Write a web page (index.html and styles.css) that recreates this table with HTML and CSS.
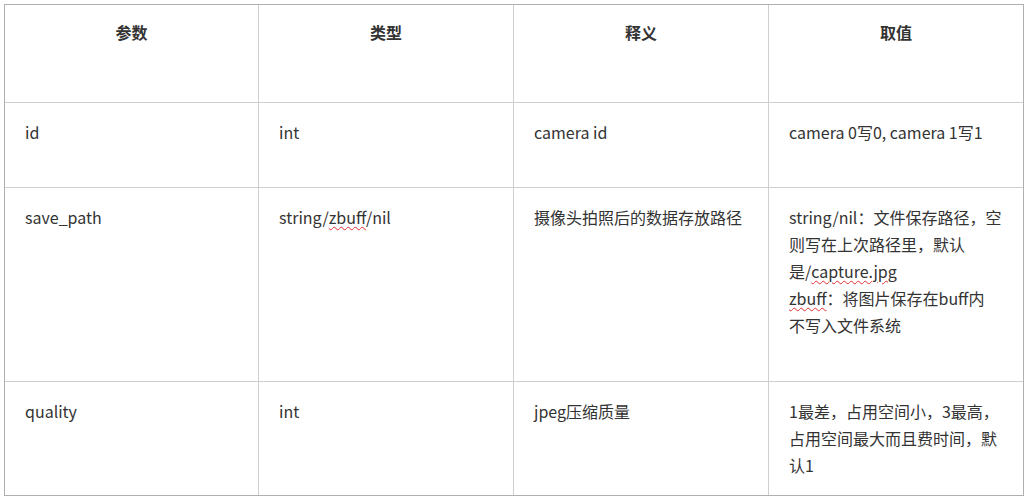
FILE: index.html
```html
<!DOCTYPE html>
<html lang="zh-CN">
<head>
    <meta charset="UTF-8">
    <title>camera.capture 参数</title>
    <link rel="stylesheet" href="styles.css">
</head>
<body>
    <table class="param-table">
        <colgroup>
            <col class="col-a">
            <col class="col-b">
            <col class="col-c">
            <col class="col-d">
        </colgroup>
        <thead>
            <tr class="row-head">
                <th>参数</th>
                <th>类型</th>
                <th>释义</th>
                <th>取值</th>
            </tr>
        </thead>
        <tbody>
            <tr class="row-id">
                <td>id</td>
                <td>int</td>
                <td>camera id</td>
                <td>camera 0写0, camera 1写1</td>
            </tr>
            <tr class="row-path">
                <td>save_path</td>
                <td>string/<span class="typo">zbuff</span>/nil</td>
                <td>摄像头拍照后的数据存放路径</td>
                <td>string/nil：文件保存路径，空则写在上次路径里，默认是/<span class="typo">capture.jpg</span><br><span class="typo">zbuff</span>：将图片保存在buff内<br>不写入文件系统</td>
            </tr>
            <tr class="row-quality">
                <td>quality</td>
                <td>int</td>
                <td>jpeg压缩质量</td>
                <td>1最差，占用空间小，3最高，占用空间最大而且费时间，默认1</td>
            </tr>
        </tbody>
    </table>
</body>
</html>
```

FILE: styles.css
```css
body {
    margin: 0;
    background-color: #fff;
    color: #333;
    font-family: "Microsoft YaHei", "Noto Sans CJK SC", sans-serif;
    font-size: 16px;
}

.param-table {
    margin: 4px 0 0 4px;
    width: 1020px;
    table-layout: fixed;
    border: 1px solid #b0b0b0;
    border-spacing: 0;
}

.col-a { width: 254px; }
.col-b { width: 255px; }
.col-c { width: 255px; }
.col-d { width: 254px; }

.param-table th,
.param-table td {
    padding: 16px 20px;
    line-height: 27px;
    vertical-align: top;
    text-align: left;
    border-right: 1px solid #cfcfcf;
    border-bottom: 1px solid #cfcfcf;
    word-wrap: break-word;
}

.param-table th {
    padding-top: 14px;
    text-align: center;
    font-weight: bold;
}

.param-table th:last-child,
.param-table td:last-child {
    border-right: none;
}

.param-table tbody tr:last-child td {
    border-bottom: none;
}

.row-head { height: 98px; }
.row-id { height: 85px; }
.row-path { height: 194px; }
.row-quality { height: 112px; }

/* красная волнистая линия проверки орфографии */
.typo {
    text-decoration: underline wavy #e23030;
    text-decoration-thickness: 1px;
    text-underline-offset: 2px;
}
```
